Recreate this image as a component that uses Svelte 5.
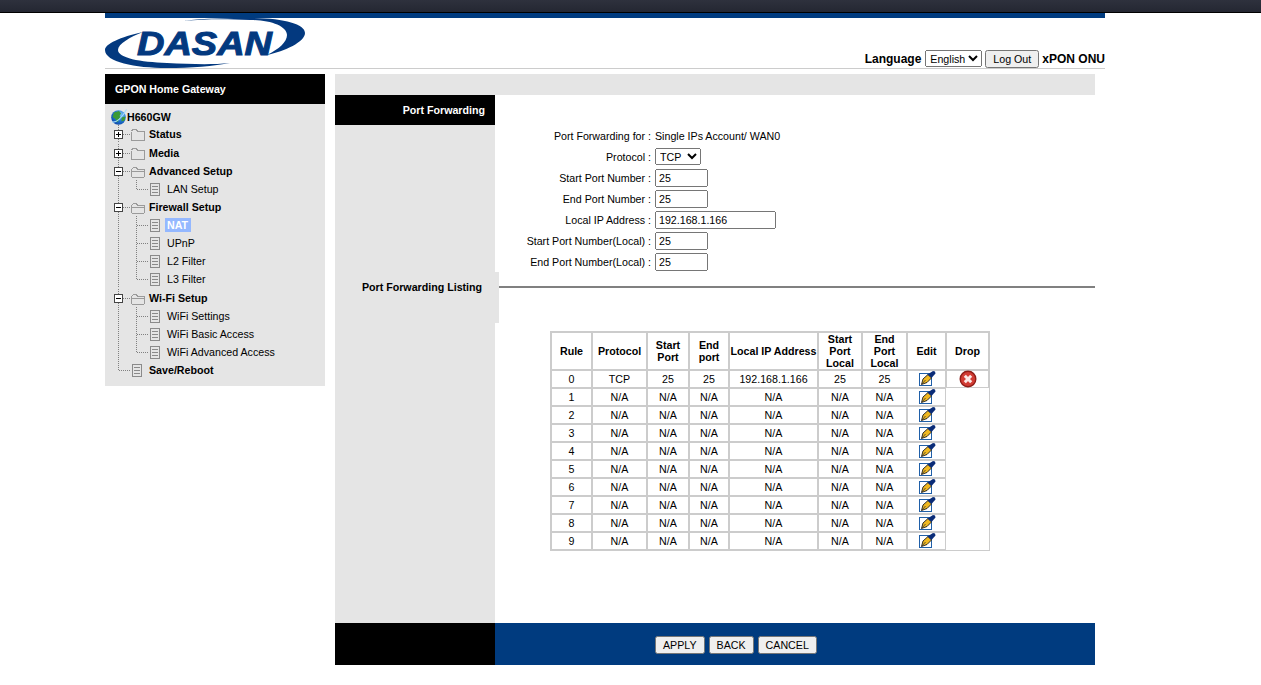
<script lang="ts">
  type Cell = 'line' | 'join' | 'joinbottom' | 'plus' | 'minus' | 'folder' | 'folderopen' | 'page';

  interface TreeRow {
    text: string;
    cells: Cell[];
    bold?: boolean;
    selected?: boolean;
    tall?: boolean;
  }

  const tree: TreeRow[] = [
    { text: 'Status', cells: ['plus', 'folder'], bold: true },
    { text: 'Media', cells: ['plus', 'folder'], bold: true, tall: true },
    { text: 'Advanced Setup', cells: ['minus', 'folderopen'], bold: true },
    { text: 'LAN Setup', cells: ['line', 'joinbottom', 'page'] },
    { text: 'Firewall Setup', cells: ['minus', 'folderopen'], bold: true },
    { text: 'NAT', cells: ['line', 'join', 'page'], selected: true },
    { text: 'UPnP', cells: ['line', 'join', 'page'] },
    { text: 'L2 Filter', cells: ['line', 'join', 'page'] },
    { text: 'L3 Filter', cells: ['line', 'joinbottom', 'page'] },
    { text: 'Wi-Fi Setup', cells: ['minus', 'folderopen'], bold: true, tall: true },
    { text: 'WiFi Settings', cells: ['line', 'join', 'page'] },
    { text: 'WiFi Basic Access', cells: ['line', 'join', 'page'] },
    { text: 'WiFi Advanced Access', cells: ['line', 'joinbottom', 'page'] },
    { text: 'Save/Reboot', cells: ['joinbottom', 'page'], bold: true }
  ];

  const fields = [
    { label: 'Start Port Number', value: '25', wide: false },
    { label: 'End Port Number', value: '25', wide: false },
    { label: 'Local IP Address', value: '192.168.1.166', wide: true },
    { label: 'Start Port Number(Local)', value: '25', wide: false },
    { label: 'End Port Number(Local)', value: '25', wide: false }
  ];

  const rules = Array.from({ length: 10 }, (_, i) =>
    i === 0
      ? ['0', 'TCP', '25', '25', '192.168.1.166', '25', '25']
      : [String(i), 'N/A', 'N/A', 'N/A', 'N/A', 'N/A', 'N/A']
  );
</script>

{#snippet treeCell(kind: Cell)}
  <svg class="cell" width="18" height="18" viewBox="0 0 18 18">
    <g fill="none" stroke="#808080" stroke-width="1" shape-rendering="crispEdges">
      {#if kind === 'line'}
        <path d="M9.5 0V18" stroke-dasharray="1 1" />
      {:else if kind === 'join'}
        <path d="M9.5 0V18M10 9.5H18" stroke-dasharray="1 1" />
      {:else if kind === 'joinbottom'}
        <path d="M9.5 0V9.5H18" stroke-dasharray="1 1" />
      {:else if kind === 'plus' || kind === 'minus'}
        <path d="M9.5 0V5M9.5 14V18M14 9.5H18" stroke-dasharray="1 1" />
        <rect x="5.5" y="5.5" width="8" height="8" fill="#fff" stroke="#444" />
        <path d="M7 9.5H12" stroke="#000" />
        {#if kind === 'plus'}
          <path d="M9.5 7V12" stroke="#000" />
        {/if}
      {:else if kind === 'folder'}
        <path d="M0 9.5H3" stroke-dasharray="1 1" />
        <path d="M4.5 6.5V15.5H17.5V6.5H10.5L9.5 4.5H5.5L4.5 6.5" stroke="#9a9a9a" />
      {:else if kind === 'folderopen'}
        <path d="M0 9.5H3" stroke-dasharray="1 1" />
        <path d="M5.5 15.5H16.5L17.5 14.5V7.5H10.5L9.5 5.5H6.5L4.5 7.5V14.5ZM4.5 9.5H17.5" stroke="#9a9a9a" />
      {:else if kind === 'page'}
        <path d="M0 9.5H3" stroke-dasharray="1 1" />
        <rect x="5.5" y="3.5" width="9" height="12" stroke="#8a8a8a" />
        <path d="M7 6.5H13M7 9.5H13M7 12.5H13" stroke="#8a8a8a" />
      {/if}
    </g>
  </svg>
{/snippet}

{#snippet editIcon()}
  <svg class="edit" width="18" height="16" viewBox="0 0 18 16">
    <rect x="1.5" y="2.5" width="12" height="12" fill="#fff" stroke="#1f5fa8" />
    <path d="M3.5 13.5L5 8L10 3.5L13.5 7L9 11.5Z" fill="#f0b820" stroke="#1a1a1a" stroke-width="0.9" />
    <path d="M3.8 13.2L7.5 9" stroke="#333" stroke-width="0.8" />
    <path d="M9.5 3.5L15 0L17 0.5L17.5 2.5L13.5 7Z" fill="#0a2c78" />
  </svg>
{/snippet}

<div class="topbar"></div>

<div class="page">
  <header class="masthead">
    <svg class="logo" width="200" height="50" viewBox="0 0 200 50">
      <path d="M38 14C15 19 0 26 0 32C0 44 30 50 62 50C85 50 110 48 125 45C105 47 85 46 62 45C35 44 13 40 13 32C13 26 25 19 38 14Z" fill="#03397f" />
      <path d="M78 3C100 0 125 0 145 0C178 0 200 6 200 15C200 24 180 33 162 37C174 31 182 24 182 17C182 8 165 2 145 2C120 1 100 1 78 3Z" fill="#03397f" />
      <text x="32" y="37" textLength="135" lengthAdjust="spacingAndGlyphs" class="logo-text">DASAN</text>
    </svg>
    <div class="session">
      <b class="lang-label">Language</b>
      <select class="lang"><option>English</option></select>
      <button class="btn logout">Log Out</button>
      <b>xPON ONU</b>
    </div>
  </header>

  <div class="columns">
    <aside class="sidebar">
      <div class="side-title">GPON Home Gateway</div>
      <nav class="tree">
        <div class="root">
          <svg width="16" height="16" viewBox="0 0 16 16">
            <defs>
              <radialGradient id="globe" cx="0.65" cy="0.3" r="0.85">
                <stop offset="0" stop-color="#7cc4f5" />
                <stop offset="0.55" stop-color="#1c6fd0" />
                <stop offset="1" stop-color="#0a3a96" />
              </radialGradient>
            </defs>
            <circle cx="7.5" cy="8.5" r="7.3" fill="url(#globe)" />
            <path d="M3 3.5L8 2L10 4.5L8.5 7L10 8.5L8 11L6 13.5L4.5 10L1.5 8ZM10.5 8.5L14.5 7.5L13.5 11.5L10.5 12.5Z" fill="#3c9a36" />
            <path d="M1 13C5 14 11 9 15.5 0.5" fill="none" stroke="#a4dcff" stroke-width="1.1" />
          </svg>
          <b>H660GW</b>
        </div>
        {#each tree as row}
          <div class="row" class:tall={row.tall}>
            {#each row.cells as kind}
              {@render treeCell(kind)}
            {/each}
            <span class="label" class:bold={row.bold} class:selected={row.selected}>{row.text}</span>
          </div>
        {/each}
      </nav>
    </aside>

    <main class="content">
      <div class="strip"></div>
      <div class="panel">
        <div class="left">
          <div class="left-title">Port Forwarding</div>
          <div class="left-body">
            <div class="tab">Port Forwarding Listing</div>
          </div>
        </div>

        <div class="right">
          <div class="form">
            <div class="field">
              <span class="key">Port Forwarding for :</span>
              <span>Single IPs Account/ WAN0</span>
            </div>
            <div class="field">
              <span class="key">Protocol :</span>
              <select class="proto"><option>TCP</option></select>
            </div>
            {#each fields as f}
              <div class="field">
                <span class="key">{f.label} :</span>
                <input class="num" class:wide={f.wide} type="text" value={f.value} />
              </div>
            {/each}
          </div>

          <hr class="rule" />

          <table class="rules">
            <thead>
              <tr>
                <th class="c1">Rule</th>
                <th class="c2">Protocol</th>
                <th class="c3">Start Port</th>
                <th class="c4">End port</th>
                <th class="c5">Local IP Address</th>
                <th class="c6">Start Port Local</th>
                <th class="c7">End Port Local</th>
                <th class="c8">Edit</th>
                <th class="c9">Drop</th>
              </tr>
            </thead>
            <tbody>
              {#each rules as cols, i}
                <tr>
                  {#each cols as col}
                    <td>{col}</td>
                  {/each}
                  <td class="icon">{@render editIcon()}</td>
                  {#if i === 0}
                    <td class="icon">
                      <svg class="drop" width="18" height="18" viewBox="0 0 18 18">
                        <circle cx="9" cy="9" r="7.8" fill="#d23c34" stroke="#8e1c16" stroke-width="1.4" />
                        <path d="M5.8 5.8L12.2 12.2M12.2 5.8L5.8 12.2" stroke="#fbe9e7" stroke-width="3" />
                      </svg>
                    </td>
                  {/if}
                </tr>
              {/each}
            </tbody>
          </table>
        </div>
      </div>
      <footer class="actions">
        <div class="actions-left"></div>
        <div class="actions-right">
          <button class="btn">APPLY</button>
          <button class="btn">BACK</button>
          <button class="btn">CANCEL</button>
        </div>
      </footer>
    </main>
  </div>
</div>

<style>
  :global(body) {
    margin: 0;
    background: #fff;
    font-family: "Liberation Sans", Arial, sans-serif;
    font-size: 8pt;
    color: #000;
  }

  .topbar {
    height: 12px;
    background: linear-gradient(#2e313d, #242732);
    border-bottom: 1px solid #000;
  }

  .page {
    width: 1000px;
    margin-left: 105px;
  }

  .masthead {
    display: flex;
    justify-content: space-between;
    align-items: flex-end;
    height: 50px;
    border-top: 5px solid #003b7f;
    border-bottom: 1px solid #ccc;
  }

  .logo {
    display: block;
  }

  .logo-text {
    font-family: "Liberation Sans", Arial, sans-serif;
    font-size: 33px;
    font-weight: 700;
    font-style: italic;
    fill: #03397f;
    stroke: #03397f;
    stroke-width: 1;
  }

  .session {
    display: flex;
    align-items: center;
    gap: 3px;
    font-size: 12px;
    height: 19px;
  }

  .lang-label {
    margin-right: 1px;
  }

  .lang {
    width: 57px;
    height: 17px;
    font: 8pt "Liberation Sans", Arial, sans-serif;
    padding: 0;
  }

  .btn {
    height: 18px;
    padding: 0 6px;
    font: 8pt "Liberation Sans", Arial, sans-serif;
    white-space: nowrap;
  }

  .logout {
    width: 54px;
    padding: 0;
  }

  .columns {
    display: flex;
    gap: 10px;
    margin-top: 5px;
  }

  .sidebar {
    width: 220px;
    flex: none;
    align-self: flex-start;
    background: #e5e5e5;
  }

  .side-title {
    height: 30px;
    line-height: 30px;
    padding-left: 10px;
    background: #000;
    color: #fff;
    font-weight: 700;
  }

  .tree {
    padding: 4px 0 7px 4px;
  }

  .root {
    display: flex;
    align-items: center;
    height: 17px;
    padding-left: 2px;
    font-weight: 700;
  }

  .row {
    display: flex;
    align-items: center;
    height: 18px;
  }

  .row.tall {
    box-sizing: border-box;
    height: 19px;
    padding-top: 1px;
  }

  .cell {
    display: block;
    flex: none;
  }

  .label {
    margin-left: 4px;
    line-height: 14px;
    white-space: nowrap;
  }

  .label.bold {
    font-weight: 700;
  }

  .label.selected {
    margin-left: 2px;
    padding: 0 3px 0 2px;
    background: #94b8ff;
    color: #fff;
    font-weight: 700;
  }

  .content {
    width: 760px;
  }

  .strip {
    height: 21px;
    background: #e5e5e5;
  }

  .panel {
    display: flex;
    height: 528px;
  }

  .left {
    width: 160px;
    flex: none;
    display: flex;
    flex-direction: column;
  }

  .left-title {
    height: 30px;
    line-height: 30px;
    padding-right: 10px;
    text-align: right;
    background: #000;
    color: #fff;
    font-weight: 700;
  }

  .left-body {
    flex: 1;
    padding-top: 147px;
    background: #e5e5e5;
  }

  .tab {
    box-sizing: border-box;
    width: 164px;
    height: 51px;
    padding: 9px 0 0 10px;
    text-align: center;
    background: #e5e5e5;
    font-weight: 700;
  }

  .right {
    flex: 1;
    min-width: 0;
  }

  .form {
    padding-top: 30px;
  }

  .field {
    display: flex;
    align-items: center;
    gap: 4px;
    height: 21px;
  }

  .key {
    width: 156px;
    text-align: right;
    flex: none;
  }

  .proto {
    width: 46px;
    height: 17px;
    font: 8pt "Liberation Sans", Arial, sans-serif;
    padding: 0;
  }

  .num {
    box-sizing: border-box;
    width: 53px;
    height: 18px;
    padding: 1px 2px;
    font: 8pt "Liberation Sans", Arial, sans-serif;
  }

  .num.wide {
    width: 121px;
  }

  .rule {
    height: 2px;
    margin: 14px 0 0 4px;
    border: 0;
    background: #808080;
  }

  .rules {
    box-sizing: border-box;
    width: 440px;
    margin: 43px 0 0 55px;
    table-layout: fixed;
    border-collapse: separate;
    border-spacing: 0;
    border: 1px solid #ccc;
  }

  .rules th,
  .rules td {
    box-sizing: border-box;
    padding: 0;
    text-align: center;
    border: 1px solid #ccc;
  }

  .rules th {
    height: 38px;
    font-weight: 700;
  }

  .rules td {
    height: 18px;
  }

  .rules td.icon {
    line-height: 0;
  }

  .rules svg {
    display: block;
    margin: -1px auto 0;
    overflow: visible;
  }

  .rules svg.drop {
    margin: -1px auto;
  }

  .c1 { width: 41px; }
  .c2 { width: 55px; }
  .c3 { width: 42px; }
  .c4 { width: 40px; }
  .c5 { width: 89px; }
  .c6 { width: 44px; }
  .c7 { width: 45px; }
  .c8 { width: 39px; }
  .c9 { width: 43px; }

  .actions {
    display: flex;
    height: 42px;
  }

  .actions-left {
    width: 160px;
    background: #000;
  }

  .actions-right {
    flex: 1;
    display: flex;
    align-items: center;
    gap: 4px;
    padding-left: 160px;
    padding-top: 2px;
    box-sizing: border-box;
    background: #003b7f;
  }
</style>
